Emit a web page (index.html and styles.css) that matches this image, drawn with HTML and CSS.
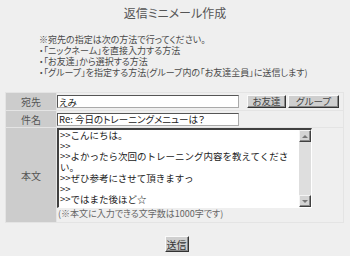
FILE: index.html
```html
<!DOCTYPE html>
<html lang="ja">
<head>
<meta charset="utf-8">
<title>返信ミニメール作成</title>
<link rel="stylesheet" href="styles.css">
</head>
<body>
<h1 class="title">返信ミニメール作成</h1>
<div class="notes">
  <p>※宛先の指定は次の方法で行ってください。</p>
  <p>・「ニックネーム」を直接入力する方法</p>
  <p>・「お友達」から選択する方法</p>
  <p>・「グループ」を指定する方法(グループ内の「お友達全員」に送信します)</p>
</div>
<form class="form">
  <table class="mail">
    <tr class="r1">
      <th class="label">宛先</th>
      <td class="field">
        <div class="line">
          <input class="txt to" type="text" value="えみ">
          <button type="button" class="btn friend">お友達</button>
          <button type="button" class="btn group">グループ</button>
        </div>
      </td>
    </tr>
    <tr class="r2">
      <th class="label">件名</th>
      <td class="field">
        <div class="line">
          <input class="txt subj" type="text" value="Re: 今日のトレーニングメニューは？">
        </div>
      </td>
    </tr>
    <tr class="r3">
      <th class="label">本文</th>
      <td class="field body">
        <div class="tabox">
          <textarea class="ta" wrap="off">&gt;&gt;こんにちは。
&gt;&gt;
&gt;&gt;よかったら次回のトレーニング内容を教えてくださ
い。
&gt;&gt;ぜひ参考にさせて頂きますっ
&gt;&gt;
&gt;&gt;ではまた後ほど☆</textarea>
          <div class="sbar">
            <div class="sbtn up"><span class="arr arr-up"></span></div>
            <div class="strack"></div>
            <div class="sbtn down"><span class="arr arr-down"></span></div>
          </div>
        </div>
        <p class="limit">(※本文に入力できる文字数は1000字です)</p>
      </td>
    </tr>
  </table>
  <div class="submit-row">
    <button type="button" class="btn send">送信</button>
  </div>
</form>
</body>
</html>
```
FILE: styles.css
```css
html, body {
  margin: 0;
  padding: 0;
}
body {
  background: #efefef;
  font-family: "Noto Sans CJK JP", "Noto Sans", sans-serif;
  color: #4a4a4a;
  width: 350px;
  height: 256px;
  overflow: hidden;
}
.title {
  margin: 0;
  padding-top: 6px;
  font-size: 12px;
  line-height: 14px;
  font-weight: normal;
  text-align: center;
  color: #555;
  font-feature-settings: "palt";
}
.notes {
  margin: 14px 0 0 39px;
  font-size: 9px;
  line-height: 11px;
  color: #4a4a4a;
  font-feature-settings: "palt";
}
.notes p {
  margin: 0;
  white-space: nowrap;
}
.form {
  margin: 14px 0 0 0;
}
.mail {
  margin-left: 5px;
  width: 339px;
  border-collapse: collapse;
  border-spacing: 0;
  border: 1px solid #9a9a9a;
}
.mail th, .mail td {
  padding: 0;
  border: 1px solid #e4e4e4;
}
.label {
  width: 50px;
  background: #cccccc;
  font-weight: normal;
  font-size: 10px;
  color: #555;
  text-align: center;
  vertical-align: middle;
  font-feature-settings: "palt";
}
.field {
  background: #efefef;
  vertical-align: top;
}
.r1 .label, .r1 .field { height: 17px; }
.r2 .label, .r2 .field { height: 16px; }
.r3 .label, .r3 .field { height: 94px; }
.line {
  display: flex;
  align-items: center;
}
.r1 .line { height: 17px; }
.r2 .line { height: 16px; }
.txt {
  box-sizing: border-box;
  margin: 0;
  height: 13px;
  padding: 0 1px;
  border: 1px solid;
  border-color: #555 #aaa #aaa #555;
  background: #fff;
  font-family: "Noto Sans CJK JP", sans-serif;
  font-size: 9.5px;
  line-height: 11px;
  color: #222;
  font-feature-settings: "palt";
}
.to, .subj {
  width: 182px;
}
.btn {
  box-sizing: border-box;
  margin: 0;
  padding: 0;
  height: 13px;
  border: 1px solid;
  border-color: #fafafa #333 #333 #fafafa;
  box-shadow: inset -1px -1px 0 #888;
  background: #cfcfcf;
  font-family: "Noto Sans CJK JP", sans-serif;
  font-size: 9.5px;
  line-height: 11px;
  color: #444;
  font-feature-settings: "palt";
}
.friend {
  width: 39px;
  margin-left: 8px;
}
.group {
  width: 51px;
  margin-left: 2px;
}
.tabox {
  display: flex;
  box-sizing: border-box;
  width: 255px;
  height: 80px;
  border-style: solid;
  border-width: 2px 1px 1px 2px;
  border-color: #404040 #fff #fff #404040;
  background: #fff;
}
.ta {
  flex: 1;
  box-sizing: border-box;
  margin: 0;
  padding: 0 0 0 1px;
  border: none;
  outline: none;
  resize: none;
  overflow: hidden;
  white-space: pre;
  background: #fff;
  font-family: "Noto Sans CJK JP", sans-serif;
  font-size: 9.5px;
  line-height: 10.7px;
  color: #222;
}
.sbar {
  width: 12px;
  display: flex;
  flex-direction: column;
  background: #dedede;
}
.sbtn {
  box-sizing: border-box;
  height: 12px;
  width: 12px;
  display: flex;
  align-items: center;
  justify-content: center;
  background: #d4d4d4;
  border: 1px solid;
  border-color: #f4f4f4 #404040 #404040 #f4f4f4;
  box-shadow: inset -1px -1px 0 #888;
}
.strack {
  flex: 1;
  background: #dedede;
}
.arr {
  width: 0;
  height: 0;
  border-left: 3px solid transparent;
  border-right: 3px solid transparent;
}
.arr-up {
  border-bottom: 3px solid #777;
}
.arr-down {
  border-top: 3px solid #777;
}
.limit {
  margin: 0;
  padding-left: 1px;
  font-size: 9px;
  line-height: 12px;
  color: #666;
  font-feature-settings: "palt";
  white-space: nowrap;
}
.submit-row {
  display: flex;
  justify-content: center;
  padding-top: 13px;
  padding-left: 3px;
}
.send {
  width: 24px;
  height: 16px;
  font-size: 10px;
  color: #333;
}
```
